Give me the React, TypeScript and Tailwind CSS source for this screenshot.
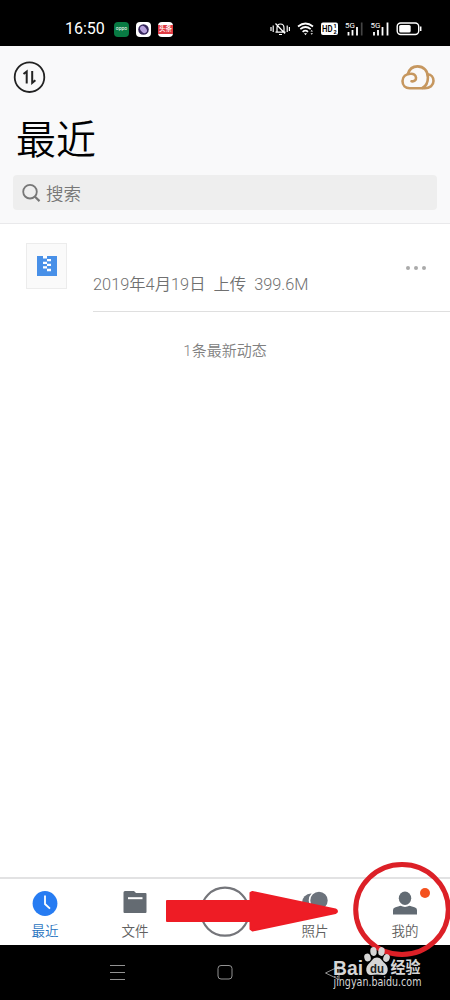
import {ReactNode} from "react";

// Icons of the system status bar
const StatusBar = () => {
  return (
    <div className="flex h-[46px] shrink-0 items-center bg-black pt-3 pr-7 pl-[65px] text-white">
      <span className="w-[49px] text-[16px] leading-[34px]">16:50</span>
      <div className="flex gap-[7px]">
        <span className="flex h-[15px] w-[15px] items-center justify-center rounded bg-[#087a43] text-[5px] font-normal">
          oppo
        </span>
        <span className="flex h-[15px] w-[15px] items-center justify-center rounded bg-white">
          <svg width="11" height="11" viewBox="0 0 11 11">
            <circle cx="5.5" cy="5.5" r="5.3" fill="#37285d" />
            <ellipse cx="5.5" cy="5.5" rx="2.8" ry="4" fill="#b6a1dc" transform="rotate(-40 5.5 5.5)" />
          </svg>
        </span>
        <span className="flex h-[15px] w-[15px] items-center justify-center rounded bg-white">
          <span className="flex h-[9px] w-[15px] items-center justify-center bg-[#df3b43] text-[6.5px] leading-[9px] font-medium">
            头条
          </span>
        </span>
      </div>
      <svg className="ml-auto" width="153" height="18" viewBox="0 0 153 18" fill="none" stroke="#fff">
        {/* Muted bell */}
        <path d="M2 7v4M4.2 5.5v6.5M18.2 5.5v6.5M20.4 7v4M6.5 12.2h10M8 12V8q0-4 3.5-4T15 8v4M10 14.5h3M6.5 3.5l9.5 10" strokeWidth="1.2" />
        {/* Wi-Fi */}
        <path d="M29 6.5q7.5-6 15 0M31.3 9.2q5.2-4.4 10.4 0M33.6 11.8q2.9-2.4 5.4 0" strokeWidth="1.7" />
        <path d="M35 13.3h3l-1.5 2z" fill="#fff" stroke="none" />
        <path d="M41.5 11.5l1.2-1.5L44 11.5zM41.5 13.2l1.2 1.5 1.3-1.5z" fill="#fff" stroke="none" />
        {/* HD voice */}
        <rect x="52" y="2.5" width="17" height="12.5" rx="2" fill="#fff" stroke="none" />
        <text x="53" y="12.3" fontSize="9" fontWeight="600" textLength="10.5" lengthAdjust="spacingAndGlyphs" fill="#000" stroke="none">HD</text>
        <text x="64.5" y="8.3" fontSize="5.5" fontWeight="700" fill="#000" stroke="none">1</text>
        <text x="64.5" y="14" fontSize="5.5" fontWeight="700" fill="#000" stroke="none">2</text>
        {/* Signal of both SIM cards */}
        <text x="76" y="7.7" fontSize="8" fontWeight="400" fill="#fff" stroke="none">5G</text>
        <path d="M79.5 12v3.5M83.5 10v5.5M88 7v8.5" strokeWidth="1.8" />
        <path d="M92.7 2.5v13" stroke="#444" strokeWidth="1.7" />
        <text x="101.5" y="7.7" fontSize="8" fontWeight="400" fill="#fff" stroke="none">5G</text>
        <path d="M105 12v3.5M109 10v5.5M113.5 7v8.5M118.5 2.5v13" strokeWidth="1.8" />
        {/* Battery */}
        <rect x="128.2" y="3" width="21.5" height="11.5" rx="3.5" strokeWidth="1.4" />
        <rect x="130.2" y="5" width="11.5" height="7.5" rx="1.5" fill="#fff" stroke="none" />
        <path d="M151.7 6.5v4.5" strokeWidth="1.5" />
      </svg>
    </div>
  );
};

const Header = () => {
  return (
    <header className="h-[178px] shrink-0 border-b border-[#e9e9eb] bg-[#f9f9fa] px-[13px] pt-[15px]">
      <div className="flex items-center justify-between pr-[1px]">
        <svg width="33" height="33" viewBox="0 0 33 33" fill="none" stroke="#222" strokeWidth="1.8">
          <circle cx="16.5" cy="16.2" r="14.8" />
          <path d="M10.5 13l3.2-2.5v12M19.2 10v11.8l3.2-2.6" strokeWidth="2" />
        </svg>
        <svg width="36" height="28" viewBox="0 0 36 28" fill="none" stroke="#c6975f" strokeWidth="2.6" strokeLinecap="round">
          <path d="M11.5 17.2c2.8.6 4.8-1.2 4.5-3.6-.3-2.6-2.6-4.100-5.400-3.900C6 9.900 2.500 12.800 2.500 17c0 4.500 3 7.200 7.200 7.200h15c5.200 0 8.800-3 8.800-7.200 0-3.700-2.300-6.400-5.700-6.700" />
          <path d="M7.900 9.900C9.300 5.300 13 2.400 17.500 2.400c6.100 0 10.400 4.400 10.400 11 0 5.200-2.200 8.800-5.500 10.500" />
        </svg>
      </div>
      <h1 className="mt-[17px] pl-[3px] text-[40px] leading-[60px] font-[350] text-black">最近</h1>
      <div className="mt-[4px] flex h-[35px] items-center rounded bg-[#eeeeee] pl-[9px] text-[17.5px] font-[350] text-[#777]">
        <svg className="mr-[5px]" width="19" height="20" viewBox="0 0 19 20" fill="none" stroke="#777" strokeWidth="1.8">
          <circle cx="8" cy="8.7" r="6.8" />
          <path d="M13 13.7l4.5 4.4" strokeWidth="2.2" />
        </svg>
        <span className="pt-[3px]">搜索</span>
      </div>
    </header>
  );
};

// A single uploaded archive
const FileRow = () => {
  return (
    <div className="flex h-[88px] shrink-0">
      <div className="mt-[19px] ml-[26px] flex h-[46px] w-[41px] items-center justify-center border border-[#ececec] bg-[#fafafa]">
        <svg width="20" height="20" viewBox="0 0 20 20">
          <path d="M0 0h20v20H0z" fill="#4890e8" />
          <path d="M6 0h4v2.500H6zM10 3h4v2.300h-4zM6 5.800h4v2.300H6zM10 7.800h4v2.300h-4zM6 10.300h4v2.300H6zM10 12.800h4v2.500h-4z" fill="#fff" />
        </svg>
      </div>
      <div className="ml-[26px] flex flex-1 items-end justify-between border-b border-[#dfdfdf] pr-6">
        <p className="pb-[14px] text-[16.35px] leading-6 font-[350] whitespace-pre text-[#707070]">
          2019年4月19日{"  "}上传{"  "}399.6M
        </p>
        <div className="mb-[41px] flex gap-1">
          <span className="h-[4px] w-[4px] rounded-full bg-[#aaa]" />
          <span className="h-[4px] w-[4px] rounded-full bg-[#aaa]" />
          <span className="h-[4px] w-[4px] rounded-full bg-[#aaa]" />
        </div>
      </div>
    </div>
  );
};

type TabProps = {
  label: string;
  active?: boolean;
  children: ReactNode;
};

const Tab = ({label, active, children}: TabProps) => {
  return (
    <div className="relative flex flex-1 flex-col items-center pt-[11px]">
      <div className="flex h-[29px] items-start pt-[1px]">{children}</div>
      <span className={`text-[13.5px] leading-[28px] font-[350] ${active ? "text-[#2874c0]" : "text-[#606060]"}`}>{label}</span>
    </div>
  );
};

const TabBar = () => {
  return (
    <nav className="flex h-[68px] shrink-0 border-t-2 border-[#e2e2e3] bg-white">
      <Tab label="最近" active>
        <svg width="26" height="26" viewBox="0 0 26 26">
          <circle cx="13" cy="12.5" r="12.4" fill="#277cf2" />
          <path d="M13 4.5V13l5 4.7" fill="none" stroke="#fff" strokeWidth="1.8" />
        </svg>
      </Tab>
      <Tab label="文件">
        <svg width="24" height="24" viewBox="0 0 24 24">
          <path d="M2 0h9l2 2h9.500q1 0 1 1v18q0 1-1 1H1.500q-1 0-1-1V1.500Q.5 0 2 0z" fill="#646b72" />
          <path d="M5 7.200h14.500" stroke="#fff" strokeWidth="2" />
        </svg>
      </Tab>
      <div className="flex flex-1 justify-center pt-[7px]">
        <svg width="50" height="51" viewBox="0 0 50 51">
          <circle cx="25" cy="25.700" r="24" fill="none" stroke="#74757a" strokeWidth="2.200" />
        </svg>
      </div>
      <Tab label="照片">
        <svg width="26" height="26" viewBox="0 0 26 26" fill="#6c737c">
          <circle cx="9" cy="11.500" r="9" />
          <circle cx="17" cy="9.500" r="9.500" stroke="#fff" strokeWidth="1.600" />
        </svg>
      </Tab>
      <Tab label="我的">
        <svg width="26" height="26" viewBox="0 0 26 26" fill="#626b73">
          <ellipse cx="13" cy="7.200" rx="6.200" ry="6.800" />
          <path d="M1 23.500v-4.400q0-2 2.500-2.800l5-1.500q4.500 2.300 9 0l5 1.500q2.500.8 2.500 2.800v4.400z" />
        </svg>
        <span className="absolute top-[9px] right-[20px] h-2.5 w-2.5 rounded-full bg-[#f4511e]" />
      </Tab>
    </nav>
  );
};

const SystemNav = () => {
  return (
    <div className="flex h-[55px] shrink-0 items-center bg-black pl-[109px]">
      <svg width="234" height="20" viewBox="0 0 234 20" fill="none" stroke="#929292" strokeWidth="1">
        <path d="M1 2.500h15M1 9.500h15M1 16.500h15" />
        <rect x="109" y="2.500" width="14" height="13.500" rx="3" />
        <path d="M230 3.500L216.500 10l13.500 6.500z" />
      </svg>
    </div>
  );
};

const Watermark = () => {
  return (
    <div className="absolute top-[945px] left-[333px] w-24 text-[#d6d6d6]">
      <svg width="96" height="50" viewBox="0 0 96 50" fill="currentColor">
        <text x="0" y="29.500" fontSize="19.500" fontWeight="700" textLength="30" lengthAdjust="spacingAndGlyphs" fontFamily="Liberation Sans, sans-serif">Bai</text>
        <ellipse cx="34.500" cy="12.500" rx="3.200" ry="4" transform="rotate(-15 34.500 12.500)" />
        <ellipse cx="40.500" cy="6.500" rx="3.200" ry="4.400" transform="rotate(-5 40.500 6.500)" />
        <ellipse cx="48.500" cy="6.500" rx="3.200" ry="4.400" transform="rotate(8 48.500 6.500)" />
        <ellipse cx="53.500" cy="13" rx="3.200" ry="4" transform="rotate(18 53.500 13)" />
        <path d="M44 12.500c4 0 5 3.500 7.500 5.500 5 4 4 12-1.500 12-2 0-4-.5-6-.5s-4 .5-6 .5c-5.500 0-6.500-8-1.500-12 3-2.500 3.500-5.500 7.500-5.500z" />
        <text x="37" y="27.500" fontSize="13" fontWeight="700" fill="#222" textLength="14" lengthAdjust="spacingAndGlyphs" fontFamily="Liberation Sans, sans-serif">du</text>
        <text x="57.500" y="28" fontSize="15.500" fontWeight="700" textLength="30" lengthAdjust="spacingAndGlyphs">经验</text>
        <text x="0.500" y="41" fontSize="12" fontWeight="500" textLength="88" lengthAdjust="spacingAndGlyphs" fontFamily="DejaVu Sans, sans-serif">jingyan.baidu.com</text>
      </svg>
    </div>
  );
};

// Arrow and ring that point at the profile tab
const Pointer = () => {
  return (
    <svg className="absolute top-[855px] left-[160px]" width="290" height="110" viewBox="0 0 290 110">
      <path
        d="M7 46h83.500v-8l2-1 83 17.500q3 1.500 0 3.500L92.500 75.500 90.500 74v-8H7z"
        fill="#ee1c25"
        stroke="#ee1c25"
        strokeWidth="2"
        strokeLinejoin="round"
      />
      <ellipse cx="242" cy="54.500" rx="46.300" ry="45" fill="none" stroke="#dc2027" strokeWidth="5" />
    </svg>
  );
};

const App = () => {
  return (
    <div className="relative flex h-[1000px] w-[450px] flex-col overflow-hidden bg-white font-['Roboto','Noto_Sans_CJK_SC',sans-serif]">
      <StatusBar />
      <Header />
      <main className="flex flex-1 flex-col">
        <FileRow />
        <p className="mt-[27px] text-center text-[15px] leading-6 font-[350] text-[#808080]">1条最新动态</p>
      </main>
      <TabBar />
      <SystemNav />
      <Pointer />
      <Watermark />
    </div>
  );
};

export default App;
